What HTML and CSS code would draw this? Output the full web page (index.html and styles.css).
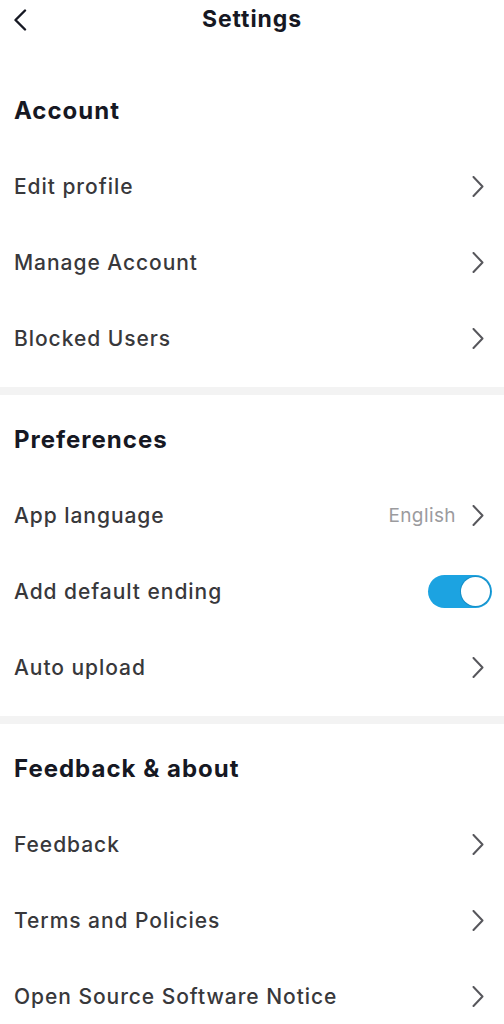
FILE: index.html
```html
<!DOCTYPE html>
<html lang="en">
<head>
<meta charset="utf-8">
<title>Settings</title>
<link rel="stylesheet" href="styles.css">
</head>
<body>
<div class="screen">
  <header class="navbar">
    <span class="back">
      <svg width="14" height="22" viewBox="0 0 14 22"><path d="M12 1.5 L2.5 11 L12 20.5" fill="none" stroke="#161823" stroke-width="2.4" stroke-linecap="round" stroke-linejoin="round"/></svg>
    </span>
    <h1 class="title">Settings</h1>
  </header>

  <section class="section first">
    <h2 class="section-title">Account</h2>
    <div class="row"><span class="label">Edit profile</span><span class="chev"><svg width="12" height="21" viewBox="0 0 12 21"><path d="M1.5 1 L10.5 10.5 L1.5 20" fill="none" stroke="#57575c" stroke-width="2" stroke-linecap="round" stroke-linejoin="round"/></svg></span></div>
    <div class="row"><span class="label">Manage Account</span><span class="chev"><svg width="12" height="21" viewBox="0 0 12 21"><path d="M1.5 1 L10.5 10.5 L1.5 20" fill="none" stroke="#57575c" stroke-width="2" stroke-linecap="round" stroke-linejoin="round"/></svg></span></div>
    <div class="row"><span class="label">Blocked Users</span><span class="chev"><svg width="12" height="21" viewBox="0 0 12 21"><path d="M1.5 1 L10.5 10.5 L1.5 20" fill="none" stroke="#57575c" stroke-width="2" stroke-linecap="round" stroke-linejoin="round"/></svg></span></div>
  </section>

  <section class="section">
    <h2 class="section-title">Preferences</h2>
    <div class="row"><span class="label">App language</span><span class="right"><span class="value">English</span><span class="chev"><svg width="12" height="21" viewBox="0 0 12 21"><path d="M1.5 1 L10.5 10.5 L1.5 20" fill="none" stroke="#57575c" stroke-width="2" stroke-linecap="round" stroke-linejoin="round"/></svg></span></span></div>
    <div class="row"><span class="label">Add default ending</span><span class="toggle on"><span class="knob"></span></span></div>
    <div class="row"><span class="label">Auto upload</span><span class="chev"><svg width="12" height="21" viewBox="0 0 12 21"><path d="M1.5 1 L10.5 10.5 L1.5 20" fill="none" stroke="#57575c" stroke-width="2" stroke-linecap="round" stroke-linejoin="round"/></svg></span></div>
  </section>

  <section class="section">
    <h2 class="section-title">Feedback &amp; about</h2>
    <div class="row"><span class="label">Feedback</span><span class="chev"><svg width="12" height="21" viewBox="0 0 12 21"><path d="M1.5 1 L10.5 10.5 L1.5 20" fill="none" stroke="#57575c" stroke-width="2" stroke-linecap="round" stroke-linejoin="round"/></svg></span></div>
    <div class="row"><span class="label">Terms and Policies</span><span class="chev"><svg width="12" height="21" viewBox="0 0 12 21"><path d="M1.5 1 L10.5 10.5 L1.5 20" fill="none" stroke="#57575c" stroke-width="2" stroke-linecap="round" stroke-linejoin="round"/></svg></span></div>
    <div class="row"><span class="label">Open Source Software Notice</span><span class="chev"><svg width="12" height="21" viewBox="0 0 12 21"><path d="M1.5 1 L10.5 10.5 L1.5 20" fill="none" stroke="#57575c" stroke-width="2" stroke-linecap="round" stroke-linejoin="round"/></svg></span></div>
  </section>
</div>
</body>
</html>
```

FILE: styles.css
```css
* { box-sizing: border-box; }
html, body { margin: 0; padding: 0; background: #ffffff; }
body {
  font-family: Inter, "Liberation Sans", Arial, sans-serif;
  color: #161823;
  width: 504px;
  height: 1024px;
  overflow: hidden;
}
.screen { display: flex; flex-direction: column; }

.navbar {
  height: 38px;
  display: flex;
  align-items: center;
  justify-content: center;
  position: relative;
}
.back {
  position: absolute;
  left: 13px;
  top: 9px;
  display: flex;
}
.title {
  margin: 0;
  font-size: 23px;
  font-weight: 700;
  letter-spacing: 0.9px;
  color: #161823;
}

.section {
  padding: 6px 0 11px;
  border-bottom: 8px solid #f3f3f3;
}
.section.first { padding-top: 34px; }
.section:last-child { border-bottom: none; }

.section-title {
  margin: 0;
  height: 76px;
  display: flex;
  align-items: center;
  padding: 0 14px;
  font-size: 24px;
  font-weight: 700;
  letter-spacing: 1px;
  color: #161823;
}

.row {
  height: 76px;
  display: flex;
  align-items: center;
  justify-content: space-between;
  padding: 0 20px 0 14px;
}
.label {
  font-size: 21px;
  font-weight: 500;
  color: #38383b;
  letter-spacing: 0.95px;
}
.chev { display: flex; width: 12px; }
.right { display: flex; align-items: center; gap: 16px; }
.value {
  font-size: 19px;
  color: #9b9b9e;
  letter-spacing: 0.4px;
}

.toggle {
  width: 64px;
  height: 33px;
  border-radius: 17px;
  background: #1ca3e1;
  display: flex;
  align-items: center;
  justify-content: flex-end;
  padding: 0 2px;
  margin-right: -8px;
}
.knob {
  width: 29px;
  height: 29px;
  border-radius: 50%;
  background: #ffffff;
  box-shadow: 0 0 0 1px rgba(0, 80, 120, 0.25);
}
```
